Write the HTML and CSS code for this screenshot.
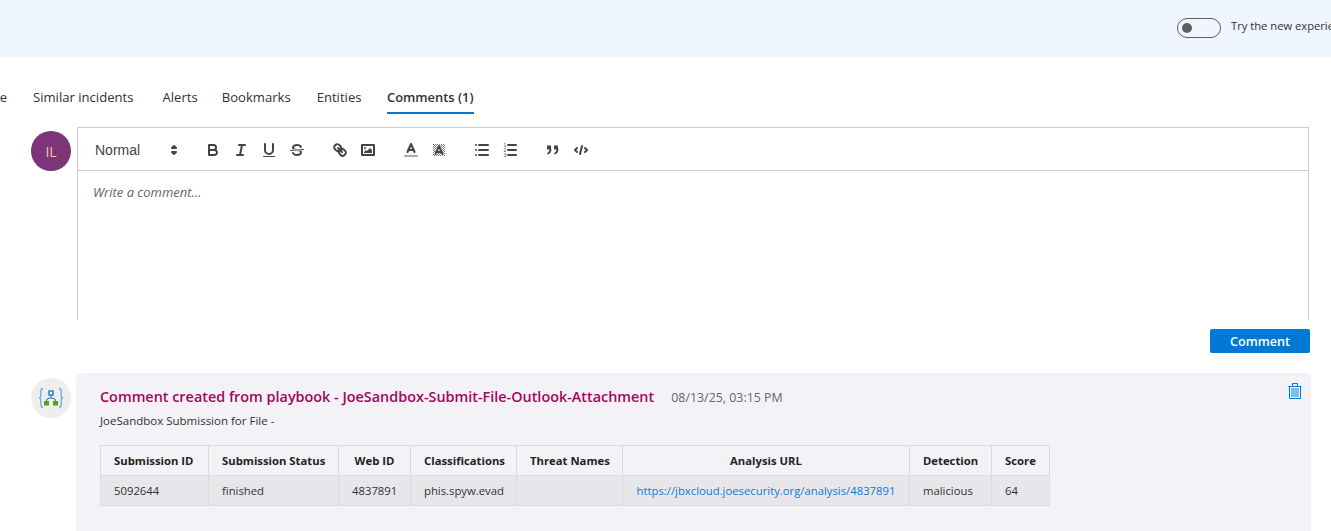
FILE: index.html
```html
<!DOCTYPE html>
<html lang="en">
<head>
<meta charset="utf-8">
<title>Incident comments</title>
<link rel="stylesheet" href="styles.css">
</head>
<body>
<header class="banner">
  <span class="toggle"><span class="toggle-dot"></span></span>
  <span class="banner-text">Try the new experience</span>
</header>
<nav class="tabs">
  <a class="tab tab-first">Timeline</a>
  <a class="tab tab-similar">Similar incidents</a>
  <a class="tab tab-alerts">Alerts</a>
  <a class="tab tab-bookmarks">Bookmarks</a>
  <a class="tab tab-entities">Entities</a>
  <a class="tab tab-active">Comments (1)</a>
</nav>
<section class="composer">
  <div class="avatar avatar-user">IL</div>
  <div class="editor">
    <div class="toolbar">
      <span class="picker">Normal
        <svg class="picker-arrows" viewBox="0 0 18 18"><polygon class="ic-solid" points="7 11 9 13 11 11 7 11"/><polygon class="ic-solid" points="7 7 9 5 11 7 7 7"/></svg>
      </span>
      <span class="group">
        <svg class="ic" viewBox="0 0 18 18"><path d="M5,4H9.5A2.5,2.5,0,0,1,12,6.5v0A2.5,2.5,0,0,1,9.5,9H5A0,0,0,0,1,5,9V4A0,0,0,0,1,5,4Z"/><path d="M5,9h5.5A2.5,2.5,0,0,1,13,11.5v0A2.5,2.5,0,0,1,10.5,14H5a0,0,0,0,1,0,0V9A0,0,0,0,1,5,9Z"/></svg>
        <svg class="ic" viewBox="0 0 18 18"><line x1="7" x2="13" y1="4" y2="4"/><line x1="5" x2="11" y1="14" y2="14"/><line x1="8" x2="10" y1="14" y2="4"/></svg>
        <svg class="ic" viewBox="0 0 18 18"><path d="M5,3V9a4.012,4.012,0,0,0,4,4H9a4.012,4.012,0,0,0,4-4V3"/><rect class="ic-solid" height="1" rx=".5" ry=".5" width="12" x="3" y="15"/></svg>
        <svg class="ic" viewBox="0 0 18 18"><line class="ic-thin" x1="15.5" x2="2.5" y1="8.5" y2="9.5"/><path class="ic-solid" d="M9.007,8C6.542,7.791,6,7.519,6,6.5,6,5.792,7.283,5,9,5c1.571,0,2.765.679,2.969,1.309a1,1,0,0,0,1.9-.617C13.356,4.106,11.354,3,9,3,6.2,3,4,4.538,4,6.5a3.2,3.2,0,0,0,.5,1.843Z"/><path class="ic-solid" d="M8.984,10C11.457,10.208,12,10.479,12,11.5c0,.708-1.283,1.5-3,1.5-1.571,0-2.765-.679-2.969-1.309a1,1,0,1,0-1.9.617C4.644,13.894,6.646,15,9,15c2.8,0,5-1.538,5-3.5a3.2,3.2,0,0,0-.5-1.843Z"/></svg>
      </span>
      <span class="group">
        <svg class="ic" viewBox="0 0 18 18"><line x1="7" x2="11" y1="7" y2="11"/><path d="M8.9,4.577a3.476,3.476,0,0,1,.36,4.679A3.476,3.476,0,0,1,4.577,8.9C3.185,7.5,2.035,6.4,4.217,4.217S7.5,3.185,8.9,4.577Z"/><path d="M13.423,9.1a3.476,3.476,0,0,0-4.679-.36,3.476,3.476,0,0,0,.36,4.679c1.392,1.392,2.5,2.542,4.679.36S14.815,10.5,13.423,9.1Z"/></svg>
        <svg class="ic" viewBox="0 0 18 18"><rect height="10" width="12" x="3" y="4"/><circle class="ic-solid" cx="6" cy="7" r="1"/><polyline class="ic-solid" points="5 12 5 11 7 9 8 10 11 7 13 9 13 12 5 12"/></svg>
      </span>
      <span class="group">
        <svg class="ic" viewBox="0 0 18 18"><line class="ic-label" x1="3" x2="15" y1="15" y2="15"/><polyline points="5.5 11 9 3 12.5 11"/><line x1="11.63" x2="6.38" y1="9" y2="9"/></svg>
        <svg class="ic" viewBox="0 0 18 18"><defs><pattern id="hatch" width="2" height="2" patternUnits="userSpaceOnUse"><rect class="ic-hatch-dot" width="1" height="1"/><rect class="ic-hatch-dot" x="1" y="1" width="1" height="1"/></pattern></defs><rect class="ic-hatch" x="3" y="3" width="12" height="12"/><polyline class="ic-halo" points="5.500 13 9 5 12.500 13"/><polyline points="5.500 13 9 5 12.500 13"/><line x1="11.63" x2="6.38" y1="11" y2="11"/></svg>
      </span>
      <span class="group">
        <svg class="ic" viewBox="0 0 18 18"><line x1="6" x2="15" y1="4" y2="4"/><line x1="6" x2="15" y1="9" y2="9"/><line x1="6" x2="15" y1="14" y2="14"/><line x1="3" x2="3" y1="4" y2="4"/><line x1="3" x2="3" y1="9" y2="9"/><line x1="3" x2="3" y1="14" y2="14"/></svg>
        <svg class="ic" viewBox="0 0 18 18"><line x1="7" x2="15" y1="4" y2="4"/><line x1="7" x2="15" y1="9" y2="9"/><line x1="7" x2="15" y1="14" y2="14"/><text class="ic-num" x="2.400" y="5.800">1</text><text class="ic-num" x="2.400" y="10.800">2</text><text class="ic-num" x="2.400" y="15.800">3</text></svg>
      </span>
      <span class="group">
        <svg class="ic" viewBox="0 0 18 18"><rect class="ic-solid" height="4" width="4" x="3" y="4.500"/><rect class="ic-solid" height="4" width="4" x="10" y="4.500"/><path class="ic-heavy" d="M6.500,8c0,3.500-2.500,4.500-2.500,4.500"/><path class="ic-heavy" d="M13.500,8c0,3.500-2.500,4.500-2.500,4.500"/></svg>
        <svg class="ic" viewBox="0 0 18 18"><polyline points="5 7 3 9 5 11"/><polyline points="13 7 15 9 13 11"/><line x1="10" x2="8" y1="5" y2="13"/></svg>
      </span>
    </div>
    <div class="editor-body">Write a comment...</div>
  </div>
</section>
<div class="actions"><button class="btn-primary">Comment</button></div>
<section class="comment">
  <div class="avatar avatar-bot">
    <svg class="bot-icon" viewBox="0 0 26 22">
      <path class="bot-brace" d="M5 1.500C2.800 1.500 2.800 3 2.800 5v3.500C2.800 10 2 11 1 11c1 0 1.800 1 1.800 2.500V17c0 2 0 3.500 2.200 3.500"/>
      <path class="bot-brace" d="M21 1.500c2.200 0 2.200 1.500 2.200 3.500v3.500c0 1.500.8 2.500 1.800 2.500-1 0-1.800 1-1.800 2.500V17c0 2 0 3.500-2.200 3.500"/>
      <path class="bot-link" d="M13 8v3M8.500 14c0-2 2-3 4.500-3s4.500 1 4.500 3"/>
      <rect class="bot-top" x="11" y="4" width="4" height="4"/>
      <rect class="bot-leaf" x="6" y="14" width="5" height="4.500"/>
      <rect class="bot-leaf" x="15" y="14" width="5" height="4.500"/>
    </svg>
  </div>
  <article class="comment-card">
    <svg class="trash" viewBox="0 0 14 16"><path class="trash-fill" d="M3 5h8v9H3z"/><path class="trash-line" d="M.5 3.500h13M4.500 3.500v-3h5v3M1.500 3.500v12h11v-12"/></svg>
    <div class="comment-head">
      <h3 class="comment-title">Comment created from playbook - JoeSandbox-Submit-File-Outlook-Attachment</h3>
      <span class="comment-date">08/13/25, 03:15 PM</span>
    </div>
    <p class="comment-sub">JoeSandbox Submission for File -</p>
    <table class="results">
      <thead>
        <tr>
          <th class="c1">Submission ID</th><th class="c2">Submission Status</th><th class="c3 mid">Web ID</th><th class="c4">Classifications</th><th class="c5">Threat Names</th><th class="c6 mid">Analysis URL</th><th class="c7">Detection</th><th class="c8">Score</th>
        </tr>
      </thead>
      <tbody>
        <tr>
          <td>5092644</td><td>finished</td><td class="mid">4837891</td><td>phis.spyw.evad</td><td></td><td class="mid"><a class="link">https://jbxcloud.joesecurity.org/analysis/4837891</a></td><td>malicious</td><td>64</td>
        </tr>
      </tbody>
    </table>
  </article>
</section>
</body>
</html>
```
FILE: styles.css
```css
* { box-sizing: border-box; }
html, body { margin: 0; height: 531px; overflow: hidden; background: #fff; }
body { font-family: "Open Sans", "Noto Sans", sans-serif; color: #323130; width: 1331px; }

.banner { height: 57px; background: #eff6ff; display: flex; align-items: center; padding: 0 0 2px 1177px; white-space: nowrap; }
.toggle { width: 44px; height: 20px; border: 1px solid #605e5c; border-radius: 10px; display: flex; align-items: center; padding-left: 4px; flex: none; }
.toggle-dot { width: 10px; height: 10px; border-radius: 50%; background: #605e5c; }
.banner-text { font-size: 11.200px; margin: 0 0 4px 10px; color: #323130; }

.tabs { display: flex; margin: 26px 0 0 -45px; height: 31px; font-size: 13.100px; color: #323130; white-space: nowrap; }
.tab { display: block; height: 31px; line-height: 28px; }
.tab-similar { margin-left: 26px; }
.tab-alerts { margin-left: 29px; }
.tab-bookmarks { margin-left: 24px; }
.tab-entities { margin-left: 26px; }
.tab-active { margin-left: 25.500px; font-size: 12.900px; font-weight: 600; border-bottom: 2px solid #0078d4; }

.composer { display: flex; align-items: flex-start; margin: 13px 0 0 31px; }
.avatar { width: 40px; height: 40px; border-radius: 50%; flex: none; display: flex; align-items: center; justify-content: center; }
.avatar-user { background: #7b3578; color: #f5cba7; font-size: 14px; margin-top: 4px; }
.editor { margin-left: 6px; width: 1232px; height: 193px; border: 1px solid #ccc; border-bottom: 0; }
.toolbar { height: 43px; border-bottom: 1px solid #ccc; padding: 10px 8px 8px; display: flex; align-items: center; gap: 15px; }
.picker { width: 98px; position: relative; padding-left: 9px; font: 14px "Liberation Sans", Arial, sans-serif; color: #444; display: flex; align-items: center; }
.picker-arrows { position: absolute; right: 1px; top: 50%; margin-top: -9px; width: 18px; height: 18px; }
.group { display: flex; }
.ic { width: 28px; height: 24px; padding: 3px 5px; fill: none; stroke: #444; stroke-width: 2; stroke-linecap: round; stroke-linejoin: round; }
.ic-solid { fill: #444; stroke: none; }
.ic-thin { stroke-width: 1; }
.ic-heavy { stroke-width: 1.800; }
.ic-label { stroke: #aaa; }
.ic-hatch { fill: url(#hatch); stroke: none; }
.ic-hatch-dot { fill: #777; stroke: none; }
.ic-halo { stroke: #fff; stroke-width: 3; }
.ic-num { font: 5px "Liberation Sans", sans-serif; fill: #444; stroke: none; }
.picker-arrows .ic-solid { stroke: #444; stroke-width: 2; stroke-linejoin: round; }
.editor-body { padding: 12px 15px; font-size: 13px; font-style: italic; color: #666; line-height: 19px; }

.actions { display: flex; justify-content: flex-end; padding-right: 21px; margin-top: 9px; }
.btn-primary { width: 100px; height: 24px; border: 0; border-radius: 2px; background: #0078d4; color: #fff; font: 600 12.600px "Open Sans", "Noto Sans", sans-serif; }

.comment { display: flex; align-items: flex-start; margin: 20px 0 0 31px; }
.avatar-bot { background: #eeeeee; margin-top: 5px; }
.bot-icon { width: 26px; height: 22px; }
.bot-brace { fill: none; stroke: #5db5e0; stroke-width: 1.300; }
.bot-link { fill: none; stroke: #3a6ea5; stroke-width: 1.100; }
.bot-top { fill: #fff; stroke: #2b7cd3; stroke-width: 1.500; }
.bot-leaf { fill: #57a300; }

.comment-card { position: relative; margin-left: 5px; width: 1235px; height: 158px; background: #f3f2f7; border-radius: 6px 6px 0 0; padding: 14px 24px; }
.trash { position: absolute; left: 1212px; top: 10px; width: 14px; height: 16px; }
.trash-fill { fill: #85b9e8; }
.trash-line { fill: none; stroke: #0078d4; stroke-width: 1; }
.comment-head { display: flex; align-items: baseline; }
.comment-title { margin: 0; font-size: 14.400px; line-height: 20px; font-weight: 600; color: #a4065e; white-space: nowrap; }
.comment-date { margin-left: 17px; font-size: 12.400px; color: #666; }
.comment-sub { margin: 6px 0 0; font-size: 11.500px; line-height: 16px; color: #323130; }

.results { margin-top: 16px; border-collapse: collapse; table-layout: fixed; width: 950px; font-size: 11.300px; }
.results th, .results td { height: 30px; padding: 0 13px; border: 1px solid #dcdcdf; text-align: left; white-space: nowrap; overflow: hidden; }
.results th { font-weight: 700; color: #252423; }
.results td { background: #e7e7eb; color: #323130; }
.results .mid { text-align: center; }
.c1 { width: 108px; } .c2 { width: 130px; } .c3 { width: 72px; } .c4 { width: 106px; }
.c5 { width: 106px; } .c6 { width: 287px; } .c7 { width: 82px; } .c8 { width: 58px; }
.link { color: #0f78d0; }
```
